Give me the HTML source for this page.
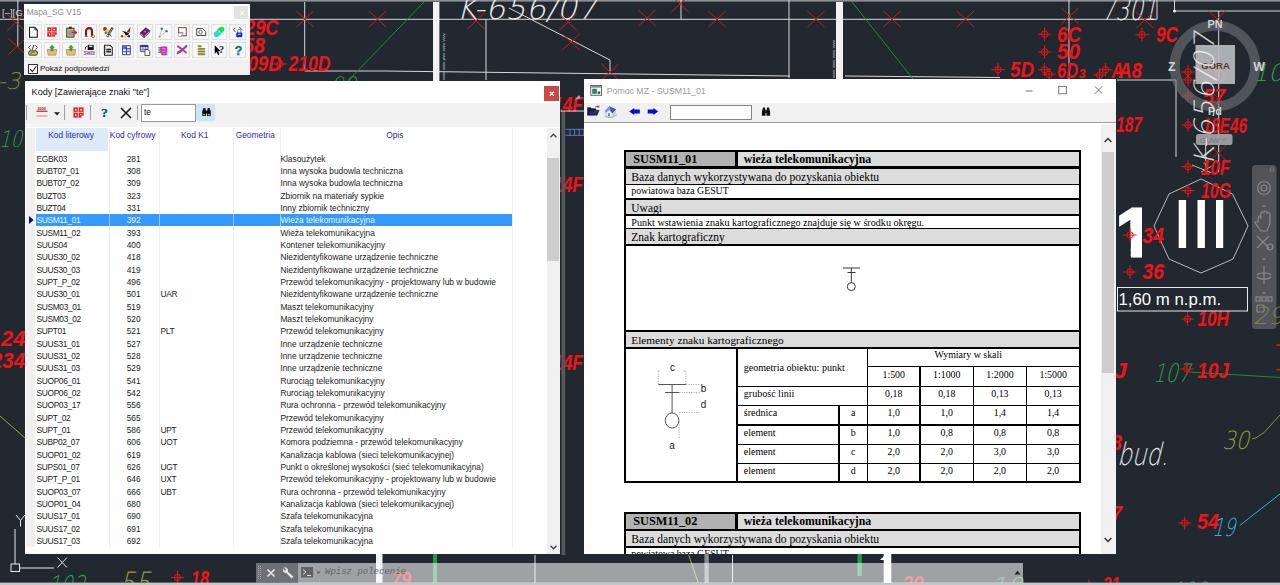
<!DOCTYPE html>
<html lang="pl"><head><meta charset="utf-8"><title>Mapa_SG V15</title>
<style>
html,body{margin:0;padding:0;}
body{width:1280px;height:585px;overflow:hidden;background:#212830;position:relative;font-family:"Liberation Sans",sans-serif;}
.abs{position:absolute;}
.win{position:absolute;background:#fff;}
.t{position:absolute;white-space:nowrap;}
.sans{font-family:"Liberation Sans",sans-serif;}
.serif{font-family:"Liberation Serif",serif;}
.mono{font-family:"Liberation Mono",monospace;}
#bg{position:absolute;left:0;top:0;}
.row{position:absolute;left:0;width:486px;height:12.33px;line-height:12.33px;font-size:8.4px;color:#1c1c1c;}
.row span{position:absolute;top:0;white-space:nowrap;}
.row .c1{left:10.9px;letter-spacing:-0.36px;}
.row .c2{left:83px;width:50px;text-align:center;}
.row .c3{left:134.8px;letter-spacing:-0.3px;}
.row .c4{left:254.7px;}
.sel{background:#3399ff;color:#fff;}
.hd{position:absolute;top:0;height:23.5px;font-size:8.4px;color:#2a2ac8;text-align:center;line-height:15px;}
.tb{position:absolute;width:14.4px;height:14.4px;background:#f7f7f7;border:0.5px solid #e0e0e0;}
.tb svg{position:absolute;left:1.3px;top:1.3px;width:12px;height:12px;}
.cell{position:absolute;background:#fff;white-space:nowrap;overflow:hidden;color:#000;}
.g{background:#dcdcdc;}
.num{text-align:center;font-size:9.9px;}
</style></head><body>
<div class="abs" style="left:1110px;top:200px;width:40px;height:62px;overflow:hidden;clip-path:polygon(0 0,32px 0,32px 60px,20.8px 60px,20.8px 38px,0 38px);"><span class="sans" style="position:absolute;left:6px;top:-1.560px;font-weight:bold;font-size:68px;line-height:68px;color:#fff;-webkit-text-stroke:3px #fff;">1</span></div><svg id="bg" width="1280" height="585" viewBox="0 0 1280 585"><rect x="0" y="0" width="1280" height="1.6" fill="#8e9194"/><g stroke="#d8d8d8" stroke-width="1" fill="none"><path d="M0 19.3H1157"/><path d="M304.7 2V71H384L790 76"/><path d="M486 19V80"/><path d="M17.800 0V47"/><path d="M681 0V19"/><path d="M789 0V78"/><path d="M845 76L1000 77.5"/><path d="M1069 0V80"/><path d="M1157 0V19.3"/><path d="M1174.5 0V11H1280"/><path d="M1117 80H1176V157"/><path d="M1218.7 11V172"/><path d="M1205.7 140V172"/><path d="M509 8L610 60V72"/><path d="M535 555V585"/><path d="M732.5 555V585"/></g><circle cx="1174.5" cy="11" r="1.5" fill="#eee"/><rect x="433" y="2" width="6.4" height="80" fill="#f2f2f2"/><rect x="836" y="2" width="7" height="78" fill="#f2f2f2"/><rect x="376" y="554" width="6.5" height="31" fill="#f2f2f2"/><rect x="883.7" y="554" width="7.6" height="31" fill="#ffffff"/><path d="M880 560L884 556V560Z" fill="#fff"/><rect x="704.5" y="554" width="4.3" height="31" fill="#8d9093"/><rect x="433" y="554" width="4" height="31" fill="#1f9d3f"/><rect x="857.5" y="554" width="4.3" height="22" fill="#1f9d3f"/><path d="M688.7 555L698.7 584" stroke="#c8c83c" stroke-width="0.8"/><text transform="translate(444.5,80) rotate(-90)" font-family="Liberation Sans, sans-serif" font-size="4" fill="#ddd">vvvv. vvvv. wvv. vvvv. vvvv.</text><text transform="translate(835,78) rotate(-90)" font-family="Liberation Sans, sans-serif" font-size="4" fill="#ddd">vvvv. vvvv. vvvv. vvvv.</text><path d="M424 2L345 84" stroke="#1e8c3c" stroke-width="1" fill="none"/><path d="M852 2L913 79" stroke="#1e8c3c" stroke-width="1" fill="none"/><path d="M1189 372L1280 377.5" stroke="#1e8c3c" stroke-width="1" fill="none"/><path d="M1252 439L1256 437.800L1264 432.600L1280 415" stroke="#8f9a2e" stroke-width="1" fill="none"/><path d="M0 416L25 438L40 452" stroke="#9aa52e" stroke-width="1" fill="none"/><path d="M1239.700 525.500L1280 494" stroke="#22b8c8" stroke-width="1" fill="none"/><text transform="translate(456,19) rotate(0) skewX(-14)" font-family="DejaVu Sans Light, DejaVu Sans, sans-serif" font-size="31" fill="#e6e6e6" fill-opacity="1" textLength="141" lengthAdjust="spacingAndGlyphs">K-656/07</text><text transform="translate(1101.5,19.5) rotate(0) skewX(-12)" font-family="DejaVu Sans Light, DejaVu Sans, sans-serif" font-size="31" fill="#e6e6e6" fill-opacity="1" textLength="55" lengthAdjust="spacingAndGlyphs">7301</text><text transform="translate(1117,465) rotate(0) skewX(-14)" font-family="DejaVu Sans Light, DejaVu Sans, sans-serif" font-size="31" fill="#e6e6e6" fill-opacity="1" textLength="51" lengthAdjust="spacingAndGlyphs">bud.</text><text x="2" y="16" font-family="Liberation Sans, sans-serif" font-size="9.5" fill="#d0d0d0">[–][G</text><text transform="translate(-2.5,89) rotate(0) skewX(-14)" font-family="DejaVu Sans Light, DejaVu Sans, sans-serif" font-size="23" fill="#909c30" fill-opacity="0.85">-3</text><text transform="translate(-1,147) rotate(0) skewX(-14)" font-family="DejaVu Sans Light, DejaVu Sans, sans-serif" font-size="23" fill="#27a048" fill-opacity="1" textLength="23" lengthAdjust="spacingAndGlyphs">10</text><text transform="translate(331,91) rotate(0) skewX(-14)" font-family="DejaVu Sans Light, DejaVu Sans, sans-serif" font-size="20" fill="#27a048" fill-opacity="1">90</text><text transform="translate(1253,80.5) rotate(0) skewX(-14)" font-family="DejaVu Sans Light, DejaVu Sans, sans-serif" font-size="24" fill="#27a048" fill-opacity="1">10</text><text transform="translate(1153,381.5) rotate(0) skewX(-14)" font-family="DejaVu Sans Light, DejaVu Sans, sans-serif" font-size="25.5" fill="#27a048" fill-opacity="1" textLength="37" lengthAdjust="spacingAndGlyphs">107</text><text transform="translate(1222,448.5) rotate(0) skewX(-14)" font-family="DejaVu Sans Light, DejaVu Sans, sans-serif" font-size="25" fill="#909c30" fill-opacity="1" textLength="27" lengthAdjust="spacingAndGlyphs">30</text><text transform="translate(1212,536) rotate(0) skewX(-14)" font-family="DejaVu Sans Light, DejaVu Sans, sans-serif" font-size="25" fill="#25bccc" fill-opacity="1" textLength="23" lengthAdjust="spacingAndGlyphs">19</text><text transform="translate(47,597) rotate(0) skewX(-14)" font-family="DejaVu Sans Light, DejaVu Sans, sans-serif" font-size="30" fill="#27a048" fill-opacity="1" textLength="37" lengthAdjust="spacingAndGlyphs">102</text><text transform="translate(119,594) rotate(0) skewX(-14)" font-family="DejaVu Sans Light, DejaVu Sans, sans-serif" font-size="31" fill="#909c30" fill-opacity="1" textLength="31" lengthAdjust="spacingAndGlyphs">55</text><text transform="translate(1171,602) rotate(0) skewX(-14)" font-family="DejaVu Sans Light, DejaVu Sans, sans-serif" font-size="28" fill="#27a048" fill-opacity="1" textLength="34" lengthAdjust="spacingAndGlyphs">106</text><text transform="translate(990,596) rotate(0) skewX(-14)" font-family="DejaVu Sans Light, DejaVu Sans, sans-serif" font-size="26" fill="#27a048" fill-opacity="1">10</text><polygon points="1201,179 1232.5,194 1248,226 1233,259 1201,273 1169,259 1154,226 1169,194" fill="none" stroke="#e0e0e0" stroke-width="0.8"/><rect x="1178.7" y="200" width="7.4" height="48" fill="#fff"/><rect x="1197.5" y="200" width="7.4" height="48" fill="#fff"/><rect x="1216" y="200" width="7.2" height="48" fill="#fff"/><path d="M1201 172L1212 166M1192 165l20 8" stroke="#e0e0e0" stroke-width="0.8"/><path d="M671.3 -4.090999999999999L688.7 12.091M671.3 12.091L688.7 -4.090999999999999" stroke="#c81c1c" stroke-width="1" fill="none"/><path d="M7.300000000000001 14.409L24.7 30.591M7.300000000000001 30.591L24.7 14.409" stroke="#c81c1c" stroke-width="1" fill="none"/><path d="M8.3 38.409L25.7 54.591M8.3 54.591L25.7 38.409" stroke="#c81c1c" stroke-width="1" fill="none"/><path d="M296.3 10.909L313.7 27.091M296.3 27.091L313.7 10.909" stroke="#c81c1c" stroke-width="1" fill="none"/><path d="M368.8 10.909L386.2 27.091M368.8 27.091L386.2 10.909" stroke="#c81c1c" stroke-width="1" fill="none"/><path d="M467.3 12.909L484.7 29.091M467.3 29.091L484.7 12.909" stroke="#c81c1c" stroke-width="1" fill="none"/><path d="M559.3 13.909L576.7 30.091M559.3 30.091L576.7 13.909" stroke="#c81c1c" stroke-width="1" fill="none"/><path d="M562.3 33.909L579.7 50.091M562.3 50.091L579.7 33.909" stroke="#c81c1c" stroke-width="1" fill="none"/><path d="M601.3 63.909L618.7 80.091M601.3 80.091L618.7 63.909" stroke="#c81c1c" stroke-width="1" fill="none"/><path d="M638.3 9.909L655.7 26.091M638.3 26.091L655.7 9.909" stroke="#c81c1c" stroke-width="1" fill="none"/><path d="M708.3 10.909L725.7 27.091M708.3 27.091L725.7 10.909" stroke="#c81c1c" stroke-width="1" fill="none"/><path d="M807.3 10.909L824.7 27.091M807.3 27.091L824.7 10.909" stroke="#c81c1c" stroke-width="1" fill="none"/><path d="M883.3 10.909L900.7 27.091M883.3 27.091L900.7 10.909" stroke="#c81c1c" stroke-width="1" fill="none"/><path d="M956.8 10.909L974.2 27.091M956.8 27.091L974.2 10.909" stroke="#c81c1c" stroke-width="1" fill="none"/><path d="M1061.3 7.909000000000001L1078.7 24.091M1061.3 24.091L1078.7 7.909000000000001" stroke="#c81c1c" stroke-width="1" fill="none"/><path d="M1136.3 11.909L1153.7 28.091M1136.3 28.091L1153.7 11.909" stroke="#c81c1c" stroke-width="1" fill="none"/><path d="M1208.3 10.909L1225.7 27.091M1208.3 27.091L1225.7 10.909" stroke="#c81c1c" stroke-width="1" fill="none"/><path d="M1209.3 89.909L1226.7 106.091M1209.3 106.091L1226.7 89.909" stroke="#c81c1c" stroke-width="1" fill="none"/><path d="M1209.3 144.909L1226.7 161.091M1209.3 161.091L1226.7 144.909" stroke="#c81c1c" stroke-width="1" fill="none"/><text x="245" y="35" font-family="Liberation Sans, sans-serif" font-size="22.5" font-weight="bold" font-style="italic" fill="#ee1418" textLength="33.5" lengthAdjust="spacingAndGlyphs">29C</text><text x="243" y="53" font-family="Liberation Sans, sans-serif" font-size="22.5" font-weight="bold" font-style="italic" fill="#ee1418" textLength="22" lengthAdjust="spacingAndGlyphs">58</text><text x="237" y="71" font-family="Liberation Sans, sans-serif" font-size="22.5" font-weight="bold" font-style="italic" fill="#ee1418" textLength="44.7" lengthAdjust="spacingAndGlyphs">209D</text><text x="288.4" y="71" font-family="Liberation Sans, sans-serif" font-size="22.5" font-weight="bold" font-style="italic" fill="#ee1418" textLength="42.2" lengthAdjust="spacingAndGlyphs">210D</text><text x="1057" y="42" font-family="Liberation Sans, sans-serif" font-size="22.5" font-weight="bold" font-style="italic" fill="#ee1418" textLength="24" lengthAdjust="spacingAndGlyphs">6C</text><text x="1057" y="59" font-family="Liberation Sans, sans-serif" font-size="22.5" font-weight="bold" font-style="italic" fill="#ee1418" textLength="23" lengthAdjust="spacingAndGlyphs">50</text><text x="1010" y="76.5" font-family="Liberation Sans, sans-serif" font-size="22.5" font-weight="bold" font-style="italic" fill="#ee1418" textLength="24" lengthAdjust="spacingAndGlyphs">5D</text><text x="1057" y="78" font-family="Liberation Sans, sans-serif" font-size="22.5" font-weight="bold" font-style="italic" fill="#ee1418" textLength="21" lengthAdjust="spacingAndGlyphs">6D</text><text x="1111.6" y="78" font-family="Liberation Sans, sans-serif" font-size="22.5" font-weight="bold" font-style="italic" fill="#ee1418" textLength="12" lengthAdjust="spacingAndGlyphs">A</text><text x="1118.5" y="78" font-family="Liberation Sans, sans-serif" font-size="22.5" font-weight="bold" font-style="italic" fill="#ee1418" textLength="23.5" lengthAdjust="spacingAndGlyphs">A8</text><text x="1156" y="42" font-family="Liberation Sans, sans-serif" font-size="22.5" font-weight="bold" font-style="italic" fill="#ee1418" textLength="22" lengthAdjust="spacingAndGlyphs">9C</text><text x="1116" y="131.6" font-family="Liberation Sans, sans-serif" font-size="22.5" font-weight="bold" font-style="italic" fill="#ee1418" textLength="26" lengthAdjust="spacingAndGlyphs">187</text><text x="1202.5" y="132.5" font-family="Liberation Sans, sans-serif" font-size="22.5" font-weight="bold" font-style="italic" fill="#ee1418" textLength="44.5" lengthAdjust="spacingAndGlyphs">18E46</text><text x="1201" y="175" font-family="Liberation Sans, sans-serif" font-size="22.5" font-weight="bold" font-style="italic" fill="#ee1418" textLength="29" lengthAdjust="spacingAndGlyphs">10F</text><text x="1201" y="198" font-family="Liberation Sans, sans-serif" font-size="22.5" font-weight="bold" font-style="italic" fill="#ee1418" textLength="30" lengthAdjust="spacingAndGlyphs">10G</text><text x="1142.5" y="242.5" font-family="Liberation Sans, sans-serif" font-size="22.5" font-weight="bold" font-style="italic" fill="#ee1418" textLength="21.5" lengthAdjust="spacingAndGlyphs">34</text><text x="1142.5" y="279" font-family="Liberation Sans, sans-serif" font-size="22.5" font-weight="bold" font-style="italic" fill="#ee1418" textLength="21.5" lengthAdjust="spacingAndGlyphs">36</text><text x="1197.5" y="326" font-family="Liberation Sans, sans-serif" font-size="22.5" font-weight="bold" font-style="italic" fill="#ee1418" textLength="31.5" lengthAdjust="spacingAndGlyphs">10H</text><text x="1197" y="377.5" font-family="Liberation Sans, sans-serif" font-size="22.5" font-weight="bold" font-style="italic" fill="#ee1418" textLength="32" lengthAdjust="spacingAndGlyphs">10J</text><text x="1086" y="377.5" font-family="Liberation Sans, sans-serif" font-size="22.5" font-weight="bold" font-style="italic" fill="#ee1418" textLength="41" lengthAdjust="spacingAndGlyphs">10J</text><text x="1197" y="529" font-family="Liberation Sans, sans-serif" font-size="22.5" font-weight="bold" font-style="italic" fill="#ee1418" textLength="22" lengthAdjust="spacingAndGlyphs">54</text><text x="1" y="345.6" font-family="Liberation Sans, sans-serif" font-size="22.5" font-weight="bold" font-style="italic" fill="#ee1418" textLength="24.5" lengthAdjust="spacingAndGlyphs">24</text><text x="-9" y="368" font-family="Liberation Sans, sans-serif" font-size="22.5" font-weight="bold" font-style="italic" fill="#ee1418" textLength="34" lengthAdjust="spacingAndGlyphs">234</text><text x="553" y="112" font-family="Liberation Sans, sans-serif" font-size="22.5" font-weight="bold" font-style="italic" fill="#ee1418" textLength="30" lengthAdjust="spacingAndGlyphs">14F</text><text x="553" y="192" font-family="Liberation Sans, sans-serif" font-size="22.5" font-weight="bold" font-style="italic" fill="#ee1418" textLength="30" lengthAdjust="spacingAndGlyphs">14F</text><text x="553" y="370" font-family="Liberation Sans, sans-serif" font-size="22.5" font-weight="bold" font-style="italic" fill="#ee1418" textLength="30" lengthAdjust="spacingAndGlyphs">14F</text><text x="191" y="585.5" font-family="Liberation Sans, sans-serif" font-size="22.5" font-weight="bold" font-style="italic" fill="#ee1418" textLength="18" lengthAdjust="spacingAndGlyphs">18</text><text x="391" y="586.5" font-family="Liberation Sans, sans-serif" font-size="22.5" font-weight="bold" font-style="italic" fill="#ee1418" textLength="20" lengthAdjust="spacingAndGlyphs">79</text><text x="902.5" y="591" font-family="Liberation Sans, sans-serif" font-size="22.5" font-weight="bold" font-style="italic" fill="#ee1418" textLength="21" lengthAdjust="spacingAndGlyphs">20</text><text x="1103" y="591.5" font-family="Liberation Sans, sans-serif" font-size="22.5" font-weight="bold" font-style="italic" fill="#ee1418" textLength="17" lengthAdjust="spacingAndGlyphs">21</text><text x="1100" y="450" font-family="Liberation Sans, sans-serif" font-size="22.5" font-weight="bold" font-style="italic" fill="#ee1418" textLength="22" lengthAdjust="spacingAndGlyphs">98</text><text x="1100" y="521" font-family="Liberation Sans, sans-serif" font-size="22.5" font-weight="bold" font-style="italic" fill="#ee1418" textLength="22" lengthAdjust="spacingAndGlyphs">37</text><text x="1203" y="84" font-family="Liberation Sans, sans-serif" font-size="22.5" font-weight="bold" font-style="italic" fill="#ee1418" textLength="22" lengthAdjust="spacingAndGlyphs">5D</text><text x="1203" y="104" font-family="Liberation Sans, sans-serif" font-size="22.5" font-weight="bold" font-style="italic" fill="#ee1418" textLength="22" lengthAdjust="spacingAndGlyphs">57</text><text x="1078.5" y="78" font-family="Liberation Sans, sans-serif" font-size="13" font-weight="bold" font-style="italic" fill="#ee1418">3</text><g stroke="#e81414" stroke-width="1" fill="none"><circle cx="1044.6" cy="34.2" r="3.224"/><path d="M1037.8999999999999 34.2H1051.3M1044.6 27.500000000000004V40.900000000000006"/></g><g stroke="#e81414" stroke-width="1" fill="none"><circle cx="1044.6" cy="52" r="3.224"/><path d="M1037.8999999999999 52H1051.3M1044.6 45.3V58.7"/></g><g stroke="#e81414" stroke-width="1" fill="none"><circle cx="998" cy="69.7" r="3.224"/><path d="M991.3 69.7H1004.7M998 63.0V76.4"/></g><g stroke="#e81414" stroke-width="1" fill="none"><circle cx="1044.6" cy="69.7" r="3.224"/><path d="M1037.8999999999999 69.7H1051.3M1044.6 63.0V76.4"/></g><g stroke="#e81414" stroke-width="1" fill="none"><circle cx="1049" cy="74.4" r="3.224"/><path d="M1042.3 74.4H1055.7M1049 67.7V81.10000000000001"/></g><g stroke="#e81414" stroke-width="1" fill="none"><circle cx="1105.6" cy="69.7" r="3.224"/><path d="M1098.8999999999999 69.7H1112.3M1105.6 63.0V76.4"/></g><g stroke="#e81414" stroke-width="1" fill="none"><circle cx="1099.7" cy="75" r="3.224"/><path d="M1093.0 75H1106.4M1099.7 68.3V81.7"/></g><g stroke="#e81414" stroke-width="1" fill="none"><circle cx="1142" cy="34.7" r="3.224"/><path d="M1135.3 34.7H1148.7M1142 28.000000000000004V41.400000000000006"/></g><g stroke="#e81414" stroke-width="1" fill="none"><circle cx="1188" cy="72" r="3.224"/><path d="M1181.3 72H1194.7M1188 65.3V78.7"/></g><g stroke="#e81414" stroke-width="1" fill="none"><circle cx="1188" cy="80" r="3.224"/><path d="M1181.3 80H1194.7M1188 73.3V86.7"/></g><g stroke="#e81414" stroke-width="1" fill="none"><circle cx="1188" cy="96" r="3.224"/><path d="M1181.3 96H1194.7M1188 89.3V102.7"/></g><g stroke="#e81414" stroke-width="1" fill="none"><circle cx="1188" cy="125" r="3.224"/><path d="M1181.3 125H1194.7M1188 118.3V131.7"/></g><g stroke="#e81414" stroke-width="1" fill="none"><circle cx="1188" cy="166.7" r="3.224"/><path d="M1181.3 166.7H1194.7M1188 160.0V173.39999999999998"/></g><g stroke="#e81414" stroke-width="1" fill="none"><circle cx="1188" cy="190.6" r="3.224"/><path d="M1181.3 190.6H1194.7M1188 183.9V197.29999999999998"/></g><g stroke="#e81414" stroke-width="1" fill="none"><circle cx="1130" cy="235" r="3.224"/><path d="M1123.3 235H1136.7M1130 228.3V241.7"/></g><g stroke="#e81414" stroke-width="1" fill="none"><circle cx="1130" cy="272" r="3.224"/><path d="M1123.3 272H1136.7M1130 265.3V278.7"/></g><g stroke="#e81414" stroke-width="1" fill="none"><circle cx="1187.5" cy="319" r="3.224"/><path d="M1180.8 319H1194.2M1187.5 312.3V325.7"/></g><g stroke="#e81414" stroke-width="1" fill="none"><circle cx="1187" cy="369" r="3.224"/><path d="M1180.3 369H1193.7M1187 362.3V375.7"/></g><g stroke="#e81414" stroke-width="1" fill="none"><circle cx="1184.7" cy="523" r="3.224"/><path d="M1178.0 523H1191.4M1184.7 516.3V529.7"/></g><g stroke="#e81414" stroke-width="1" fill="none"><circle cx="1089" cy="586" r="3.224"/><path d="M1082.3 586H1095.7M1089 579.3V592.7"/></g><g stroke="#e81414" stroke-width="1" fill="none"><circle cx="280" cy="64" r="3.224"/><path d="M273.3 64H286.7M280 57.3V70.7"/></g><g stroke="#e81414" stroke-width="1" fill="none"><circle cx="177.5" cy="577.5" r="3.1"/><path d="M171.0 577.5H184.0M177.5 571.0V584.0"/></g><path d="M1276.500 345h5M1276.500 369.700h5" stroke="#f01616" stroke-width="1.600"/><rect x="561.500" y="111" width="3.800" height="444" fill="#54575b"/><path d="M561 111H585" stroke="#d8d8d8" stroke-width="1"/><g stroke="#6a7ae0" stroke-width="0.9" fill="none"><path d="M565.500 129.300H585M565.500 135.300H585M570 129.300V135.300M574.600 129.300V135.300M579.200 129.300V135.300M583.800 129.300V135.300"/></g><path d="M575 100l4-5l1.500 3z" fill="#a0b0f0"/><rect x="1117.5" y="287.5" width="130" height="23.5" fill="#212830" stroke="#e8e8e8" stroke-width="1"/><text x="1118.5" y="304.6" font-family="Liberation Sans, sans-serif" font-size="16.800" fill="#fff">1,60 m n.p.m.</text><g stroke="#e8e8e8" stroke-width="1" fill="none"><path d="M15 529V564M19.5 568H54"/><rect x="11" y="564" width="8.5" height="7.5"/><path d="M16 515l4.5 5.5l4.5-5.5M20.5 520.5V526.5M57.5 557.5l9.5 10M67 557.5l-9.5 10"/></g><rect x="0" y="582.6" width="1280" height="2.4" fill="#c4c6c8"/></svg><svg class="abs" style="left:1160px;top:10px" width="120" height="140" viewBox="1160 10 120 140"><circle cx="1215" cy="66" r="40.3" fill="none" stroke="#6c7176" stroke-opacity="0.620" stroke-width="10"/><rect x="1195.5" y="45" width="39.5" height="39" fill="#b9bbbd" fill-opacity="0.92"/><g font-family="Liberation Sans, sans-serif" font-weight="bold" fill="#d2d4d6" text-anchor="middle"><text x="1215" y="27.500" font-size="10.800">PN</text><text x="1171.700" y="71" font-size="12.300">Z</text><text x="1259" y="71" font-size="12.300">W</text><text x="1215" y="115" font-size="10.800">Pd</text></g><text x="1215.5" y="68.5" text-anchor="middle" font-family="Liberation Sans, sans-serif" font-weight="bold" font-size="9.5" fill="#5a3338">GÓRA</text><rect x="1196" y="134" width="36.5" height="11" rx="2.5" fill="#a2a5a8" fill-opacity="0.92"/><text x="1200" y="143" font-family="Liberation Sans, sans-serif" font-size="8" fill="#73777b">GUW</text><path d="M1220.500 138.500h6l-3 3z" fill="#8a8d90"/></svg><svg class="abs" style="left:1180px;top:20px" width="50" height="160" viewBox="1180 20 50 160"><text transform="translate(1213.5,166) rotate(-90) skewX(-14)" font-family="DejaVu Sans Light, DejaVu Sans, sans-serif" font-size="28" fill="#f0f0f0" fill-opacity="0.88" textLength="134" lengthAdjust="spacingAndGlyphs">K-656/07</text></svg><svg class="abs" style="left:1250px;top:163px" width="30" height="170" viewBox="1250 163 30 170"><rect x="1252" y="165" width="24.5" height="164" rx="3.5" fill="#55595e" fill-opacity="0.93"/><g stroke="#85898d" stroke-width="1.2" fill="none"><circle cx="1264" cy="188" r="6.5"/><circle cx="1264" cy="188" r="3"/><path d="M1262 206h4M1258 222c0-7 3-8 3-3v-6c2-3 3 0 3 0v-1c2-2 3 0 3 1c2-1 3 0 3 2v7c0 5-3 6-3 9h-6c-2-3-5-6-6-9z"/><path d="M1257 236l12 12M1269 236l-12 12"/><circle cx="1270" cy="247" r="2.8"/><path d="M1262 259h4"/><path d="M1264 266v18M1257 275c3-3 11-3 14 0M1257 277c3 3 11 3 14 0"/><path d="M1262 293h4"/><rect x="1256" y="297" width="4" height="4"/><rect x="1262" y="297" width="4" height="4"/><rect x="1268" y="297" width="4" height="4"/><rect x="1257" y="305" width="7" height="7" rx="1"/></g><circle cx="1272" cy="169.5" r="1.8" fill="none" stroke="#85898d" stroke-width="0.8"/></svg><svg class="abs" style="left:1250px;top:300px" width="30" height="30" viewBox="1250 300 30 30"><text transform="translate(1253,324) rotate(0) skewX(-14)" font-family="DejaVu Sans Light, DejaVu Sans, sans-serif" font-size="24" fill="#909c30" fill-opacity="0.75">29</text></svg><div class="win" style="left:24px;top:4px;width:225.5px;height:70.5px;"><div class="abs" style="left:0;top:16px;width:225.500px;height:40px;background:#f6f6f6;"></div><div class="abs" style="left:0;top:56px;width:225.500px;height:14.500px;background:#f0f0f0;"></div><div class="t sans" style="left:2.7px;top:3.2px;font-size:8.3px;color:#8c8c8c;line-height:11px;">Mapa_SG V15</div><div class="abs" style="left:210px;top:1.5px;width:14.300px;height:13.300px;background:#e2e2e2;"></div><svg class="abs" style="left:214.5px;top:5.5px" width="6" height="6" viewBox="0 0 6 6"><path d="M0.8 0.8L5.2 5.2M5.2 0.8L0.8 5.2" stroke="#f6f6f6" stroke-width="1.1"/></svg><div class="tb" style="left:1.15px;top:19.7px;"><svg viewBox="0 0 14 14"><path d="M3 1.5h6l3 3v8.5H3z" fill="#fff" stroke="#111" stroke-width="1.2"/><path d="M9 1.5v3h3" fill="none" stroke="#111" stroke-width="0.8"/></svg></div><div class="tb" style="left:19.72px;top:19.7px;"><svg viewBox="0 0 14 14"><rect x="1.500" y="1.500" width="11" height="11" fill="#e02428"/><path d="M1.500 6.800h11M6.800 1.500v11" stroke="#fbe4e4" stroke-width="0.800"/><rect x="3.300" y="3.300" width="1.600" height="1.600" fill="#fbdcdc"/><rect x="8.700" y="3.300" width="2" height="1.600" fill="#fbdcdc"/><rect x="3.300" y="8.900" width="1.600" height="1.800" fill="#fbdcdc"/><rect x="8.700" y="8.700" width="1.300" height="1.300" fill="#fbdcdc"/><rect x="10.300" y="10.300" width="3" height="3" fill="#e4e4e4"/></svg></div><div class="tb" style="left:38.29px;top:19.7px;"><svg viewBox="0 0 14 14"><rect x="2" y="2.5" width="8.5" height="10.5" fill="#d8c040" stroke="#222" stroke-width="1"/><rect x="4.5" y="0.8" width="3.5" height="2.5" fill="#333"/><rect x="4" y="5" width="5" height="6" fill="#8a8ae8"/><path d="M8 7.5h5M11 5.5l2.5 2l-2.5 2" stroke="#e02020" stroke-width="1.5" fill="none"/></svg></div><div class="tb" style="left:56.86px;top:19.7px;"><svg viewBox="0 0 14 14"><path d="M3.5 11.5V6a3.5 3.5 0 0 1 7 0v5.5" fill="none" stroke="#8a1010" stroke-width="2.4"/><path d="M2 12h3.5M9 12h3" stroke="#b02020" stroke-width="1.2"/><circle cx="12" cy="12" r="1.5" fill="#fff" stroke="#776a10" stroke-width="1"/></svg></div><div class="tb" style="left:75.43px;top:19.7px;"><svg viewBox="0 0 14 14"><circle cx="3.5" cy="3.5" r="2.3" fill="#d01818"/><circle cx="6" cy="6" r="2.2" fill="#e8d820"/><circle cx="4.5" cy="8" r="1.6" fill="#30a030"/><path d="M12.5 2L7 10.5" stroke="#333" stroke-width="2.6"/><path d="M12 2.8L7.6 9.6" stroke="#b8a860" stroke-width="1"/><path d="M4.5 11l2.5 2l2-3.5l2 3" stroke="#2848b8" stroke-width="1" fill="none"/></svg></div><div class="tb" style="left:94.00px;top:19.7px;"><svg viewBox="0 0 14 14"><path d="M12.5 1L8 6.5l3 1.8z" fill="#a01818"/><path d="M2 5.5c3 1 6 1 9 3.5l-4 2.5c-1-3-3-4.5-5-6z" fill="#111"/><circle cx="2.5" cy="12" r="1.5" fill="#e02020"/><circle cx="6.2" cy="12.3" r="1.5" fill="#e8d820"/><circle cx="10.2" cy="12" r="1.5" fill="#1818d8"/></svg></div><div class="tb" style="left:112.57px;top:19.7px;"><svg viewBox="0 0 14 14"><path d="M1.5 8L8 2l4.5 3.5L6 12z" fill="#7a1a78" stroke="#3a0a3a" stroke-width="0.8"/><path d="M1.5 8v2L6 13.5V12zM6 12l6.5-6.5v2L6 13.5z" fill="#e8e0e8" stroke="#3a0a3a" stroke-width="0.7"/><circle cx="7" cy="6.5" r="1.1" fill="#f07070"/></svg></div><div class="tb" style="left:131.14px;top:19.7px;"><svg viewBox="0 0 14 14"><path d="M3 12.5L5.5 3.5M3 12.5L11 6" stroke="#888" stroke-width="0.8" stroke-dasharray="1.5 1"/><circle cx="5.5" cy="3.2" r="1.4" fill="#1a8a80"/><circle cx="11" cy="6" r="1.4" fill="#1a8a80"/><circle cx="3" cy="12.5" r="1.1" fill="#a0a040"/></svg></div><div class="tb" style="left:149.71px;top:19.7px;"><svg viewBox="0 0 14 14"><rect x="3" y="2" width="9" height="9.5" fill="#fff" stroke="#8a3030" stroke-width="1.1"/><path d="M3.5 7.5h4.5v4" stroke="#777" stroke-width="1" fill="none"/><rect x="2.5" y="8.5" width="3.5" height="3.5" fill="#fff" stroke="#aaa" stroke-width="0.6"/></svg></div><div class="tb" style="left:168.28px;top:19.7px;"><svg viewBox="0 0 14 14"><path d="M2 3h7l3.5 3.5V11H2z" fill="#fff" stroke="#333" stroke-width="1.1"/><circle cx="6.5" cy="7" r="2" fill="none" stroke="#555" stroke-width="1.1"/></svg></div><div class="tb" style="left:186.85px;top:19.7px;"><svg viewBox="0 0 14 14"><ellipse cx="9" cy="4.8" rx="4.6" ry="3.4" transform="rotate(-35 9 4.8)" fill="#20e038"/><ellipse cx="5.2" cy="9" rx="4.6" ry="3.4" transform="rotate(-35 5.2 9)" fill="#20dce0"/><path d="M6.5 5.5l2 2" stroke="#e8fff0" stroke-width="1.2"/></svg></div><div class="tb" style="left:205.42px;top:19.7px;"><svg viewBox="0 0 14 14"><path d="M4 2L1.8 4.5L4 7M8.5 1.5l3.5 3" stroke="#333" stroke-width="1" fill="none"/><path d="M6.5 8V6a2 2 0 0 1 4 0v2" fill="none" stroke="#777" stroke-width="1.1"/><rect x="5" y="7.5" width="7" height="5.5" rx="1" fill="#1828c8"/><rect x="7" y="9" width="3" height="1.5" fill="#a8b0f8"/></svg></div><div class="tb" style="left:1.15px;top:38.1px;"><svg viewBox="0 0 14 14"><path d="M4.5 1.5L2 4l2.5 2.5M9.5 1.5L12 4L9.5 6.5M8 1L6 7" stroke="#222" stroke-width="1" fill="none"/><rect x="2" y="8" width="10" height="5" rx="1.5" fill="#c8d040" stroke="#222" stroke-width="1"/><path d="M4 11.5c1-2 3-2 5-2" stroke="#333" stroke-width="0.9" fill="none"/></svg></div><div class="tb" style="left:19.72px;top:38.1px;"><svg viewBox="0 0 14 14"><path d="M1.5 6.5h11l-1 6.5h-9z" fill="#e6bc80" stroke="#a87838" stroke-width="0.700"/><path d="M7 1.200l2.600 3H8.300v3.600H5.700V4.200H4.400z" fill="#2fb52f" stroke="#187018" stroke-width="0.500"/></svg></div><div class="tb" style="left:38.29px;top:38.1px;"><svg viewBox="0 0 14 14"><path d="M1.5 6.5h11l-1 6.5h-9z" fill="#e6bc80" stroke="#a87838" stroke-width="0.700"/><path d="M7 1.200l2.600 3H8.300v3.600H5.700V4.200H4.400z" fill="#2fb52f" stroke="#187018" stroke-width="0.500"/></svg></div><div class="tb" style="left:56.86px;top:38.1px;"><svg viewBox="0 0 14 14"><rect x="5.5" y="1" width="7" height="6" fill="#111"/><rect x="7" y="1.800" width="4" height="1.8" fill="#ddd"/><path d="M2.5 6.5c0-3 1-3.500 2.500-3.500" stroke="#222" stroke-width="1.1" fill="none"/><text x="1" y="13" font-family="Liberation Sans, sans-serif" font-size="5.200" font-weight="bold" fill="#8040a0">SWDE</text></svg></div><div class="tb" style="left:75.43px;top:38.1px;"><svg viewBox="0 0 14 14"><path d="M3 1.5h6.500l2.500 2.500V13H3z" fill="#f4f4f4" stroke="#222" stroke-width="1.2"/><path d="M2 3.500h2M2 6h2M2 8.500h2M2 11h2" stroke="#222" stroke-width="0.9"/><rect x="5" y="5.500" width="5.500" height="4.500" fill="#222"/><path d="M5 7.700h5.500" stroke="#eee" stroke-width="0.8"/></svg></div><div class="tb" style="left:94.00px;top:38.1px;"><svg viewBox="0 0 14 14"><rect x="3" y="2" width="9" height="10.500" fill="#fff" stroke="#3038a8" stroke-width="1.1"/><path d="M7.500 2v10.500M3 5.500h9M3 9h9" stroke="#3038a8" stroke-width="1.200"/><rect x="3.500" y="2.500" width="3.500" height="2.500" fill="#5868e0"/><rect x="8" y="6" width="3.500" height="2.500" fill="#a8b0f0"/></svg></div><div class="tb" style="left:112.57px;top:38.1px;"><svg viewBox="0 0 14 14"><rect x="1.500" y="1.500" width="9" height="7" fill="#fff" stroke="#2830a0" stroke-width="1"/><rect x="1.500" y="1.500" width="9" height="2.200" fill="#2830a0"/><path d="M4.500 3.700v4.800M7.500 3.700v4.800M1.500 6h9" stroke="#2830a0" stroke-width="0.700"/><path d="M7 6.500h3.500l2 2V13.500H7z" fill="#fff" stroke="#222" stroke-width="0.9"/></svg></div><div class="tb" style="left:131.14px;top:38.1px;"><svg viewBox="0 0 14 14"><rect x="4" y="3" width="8" height="8.500" rx="1.500" fill="#d028c0"/><path d="M1.500 4.500h3M1.500 7h3M1.500 9.500h3M5 12.500h7" stroke="#222" stroke-width="1"/><path d="M6 5.500h4M6 8.500h4" stroke="#f8a0f0" stroke-width="1"/></svg></div><div class="tb" style="left:149.71px;top:38.1px;"><svg viewBox="0 0 14 14"><path d="M1 11.500C5 10 9 5 13 2.500" stroke="#d028a0" stroke-width="2" fill="none"/><path d="M1 9.500C5 9 9 4 13 1.500" stroke="#207860" stroke-width="1.200" fill="none"/><path d="M1.500 2.500C5 4 9 8 12.500 10.500" stroke="#d028a0" stroke-width="2" fill="none"/></svg></div><div class="tb" style="left:168.28px;top:38.1px;"><svg viewBox="0 0 14 14"><rect x="3" y="1.500" width="5" height="2.200" rx="1" fill="#8a8a30"/><rect x="3" y="4.600" width="9" height="2.200" rx="1" fill="#8a8a30"/><rect x="3" y="7.700" width="9" height="2.200" rx="1" fill="#8a8a30"/><rect x="3" y="10.800" width="9" height="2.200" rx="1" fill="#8a8a30"/></svg></div><div class="tb" style="left:186.85px;top:38.1px;"><svg viewBox="0 0 14 14"><path d="M2 1.500v10l2.300-2.300l1.700 3.800l1.600-.8l-1.700-3.600h3.100z" fill="#000"/><text x="6.800" y="10" font-family="Liberation Serif, serif" font-size="12.500" font-weight="bold" fill="#15155e">?</text></svg></div><div class="tb" style="left:205.42px;top:38.1px;"><svg viewBox="0 0 14 14"><text x="2.800" y="12.500" font-family="Liberation Sans, sans-serif" font-size="15" font-weight="bold" fill="#0f7c8c" stroke="#0a5560" stroke-width="0.300">?</text></svg></div><div class="abs" style="left:4px;top:60px;width:8.4px;height:8.4px;border:0.9px solid #333;background:#fff;"></div><svg class="abs" style="left:5px;top:61px" width="9" height="9" viewBox="0 0 9 9"><path d="M1.2 4.2L3.400 6.700L7.300 1.300" stroke="#222" stroke-width="1.100" fill="none"/></svg><div class="t sans" style="left:16px;top:58.6px;font-size:8.05px;line-height:11px;color:#111;">Pokaż podpowiedzi</div></div><div class="win" style="left:24.700px;top:80.700px;width:535.500px;height:473px;"><div class="t sans" style="left:6.900px;top:5.400px;font-size:9.100px;line-height:12px;color:#111;">Kody [Zawierające znaki "te"]</div><div class="abs" style="left:519.800px;top:5.600px;width:14.500px;height:14.600px;background:#c84848;"></div><svg class="abs" style="left:524.500px;top:10.300px" width="5.500" height="5.500" viewBox="0 0 6 6"><path d="M0.800 0.800L5.200 5.200M5.200 0.800L0.800 5.200" stroke="#fff" stroke-width="1.300"/></svg><div class="abs" style="left:0;top:22.300px;width:535.500px;height:20.200px;background:#f1f1f1;"></div><div class="abs" style="left:0;top:42.500px;width:535.500px;height:3.500px;background:#f4f4f4;"></div><div class="abs" style="left:1.3px;top:24.500px;width:0.800px;height:15px;background:#a0a0a0;"></div><div class="abs" style="left:39.6px;top:24.500px;width:0.800px;height:15px;background:#a0a0a0;"></div><div class="abs" style="left:65.6px;top:24.500px;width:0.800px;height:15px;background:#a0a0a0;"></div><div class="abs" style="left:112.1px;top:24.500px;width:0.800px;height:15px;background:#a0a0a0;"></div><svg class="abs" style="left:11px;top:25px" width="13" height="13" viewBox="0 0 13 13"><path d="M0.500 5.200H11.500" stroke="#b82424" stroke-width="1.200"/><path d="M0.500 10H11.500" stroke="#e86060" stroke-width="0.800"/><text x="1.500" y="4.300" font-family="Liberation Sans, sans-serif" font-size="3.800" font-weight="bold" fill="#a02020">2000</text></svg><svg class="abs" style="left:29.300px;top:31px" width="6" height="4" viewBox="0 0 6 4"><path d="M0 0.300h6L3 3.600z" fill="#222"/></svg><svg class="abs" style="left:47.500px;top:25.500px" width="13" height="13" viewBox="0 0 14 14"><rect x="1.500" y="1.500" width="11" height="11" fill="#e02428"/><path d="M1.500 6.800h11M6.800 1.500v11" stroke="#fbe4e4" stroke-width="0.800"/><rect x="3.300" y="3.300" width="1.600" height="1.600" fill="#fbdcdc"/><rect x="8.700" y="3.300" width="2" height="1.600" fill="#fbdcdc"/><rect x="3.300" y="8.900" width="1.600" height="1.800" fill="#fbdcdc"/><rect x="8.700" y="8.700" width="1.300" height="1.300" fill="#fbdcdc"/><rect x="10.300" y="10.300" width="3" height="3" fill="#f4f4f4"/></svg><div class="t serif" style="left:76.200px;top:24.300px;font-size:13.500px;font-weight:bold;color:#0c7686;line-height:15px;text-shadow:0.4px 0.4px 0 #123;">?</div><svg class="abs" style="left:95px;top:26px" width="12" height="12" viewBox="0 0 12 12"><path d="M1 1L11 11M11 1L1 11" stroke="#111" stroke-width="1.500"/></svg><div class="abs" style="left:116.600px;top:23.800px;width:53px;height:15.200px;background:#fff;border:0.700px solid #9a9a9a;"></div><div class="t sans" style="left:119.300px;top:25.500px;font-size:8.400px;line-height:12px;color:#111;">te</div><div class="abs" style="left:171.300px;top:23.300px;width:19.500px;height:16.700px;background:#cce4f7;"></div><svg class="abs" style="left:176px;top:26.500px" width="11" height="10" viewBox="0 0 11 10"><path d="M1.200 9V4.500L2.500 1h1.800l.7 3.500V9zM6 9V4.500L6.700 1h1.800l1.300 3.500V9z" fill="#111"/><rect x="4.500" y="3.500" width="2" height="3" fill="#111"/><rect x="1.800" y="7" width="2.400" height="1.200" fill="#c8b040"/><rect x="6.800" y="7" width="2.400" height="1.200" fill="#c8b040"/></svg><div class="abs" style="left:1px;top:47.0px;width:534px;height:426px;background:#fff;overflow:hidden;"><div class="abs" style="left:0;top:0;width:9.800px;height:418.9px;background:#f0f0f0;"></div><div class="hd sans" style="left:10.3px;width:72.5px;background:#ddebf9;"><span style="position:relative;left:-1.2px">Kod literowy</span></div><div class="hd sans" style="left:83.3px;width:49.7px;background:#fff;"><span style="position:relative;left:-1.2px">Kod cyfrowy</span></div><div class="hd sans" style="left:133.5px;width:73.5px;background:#fff;"><span style="position:relative;left:-1.2px">Kod K1</span></div><div class="hd sans" style="left:207.5px;width:46.5px;background:#fff;"><span style="position:relative;left:-1.2px">Geometria</span></div><div class="hd sans" style="left:254.5px;width:231.5px;background:#fff;"><span style="position:relative;left:-1.2px">Opis</span></div><div class="abs" style="left:83px;top:0;width:0.800px;height:418.9px;background:#eeeeee;"></div><div class="abs" style="left:133.2px;top:0;width:0.800px;height:418.9px;background:#eeeeee;"></div><div class="abs" style="left:207.2px;top:0;width:0.800px;height:418.9px;background:#eeeeee;"></div><div class="abs" style="left:254.2px;top:0;width:0.800px;height:418.9px;background:#eeeeee;"></div><div class="abs" style="left:486px;top:0;width:0.800px;height:418.9px;background:#eeeeee;"></div><div class="row sans" style="top:24.83px;"><span class="c1">EGBK03</span><span class="c2">281</span><span class="c3"></span><span class="c4">Klasoużytek</span></div><div class="row sans" style="top:37.17px;"><span class="c1">BUBT07_01</span><span class="c2">308</span><span class="c3"></span><span class="c4">Inna wysoka budowla techniczna</span></div><div class="row sans" style="top:49.51px;"><span class="c1">BUBT07_02</span><span class="c2">309</span><span class="c3"></span><span class="c4">Inna wysoka budowla techniczna</span></div><div class="row sans" style="top:61.85px;"><span class="c1">BUZT03</span><span class="c2">323</span><span class="c3"></span><span class="c4">Zbiornik na materiały sypkie</span></div><div class="row sans" style="top:74.19px;"><span class="c1">BUZT04</span><span class="c2">331</span><span class="c3"></span><span class="c4">Inny zbiornik techniczny</span></div><div class="abs sel" style="left:10.300px;top:85.98px;width:475.700px;height:12.04px;"></div><div class="abs" style="left:83px;top:85.98px;width:0.800px;height:12.04px;background:#9ccbfb;"></div><div class="abs" style="left:133.2px;top:85.98px;width:0.800px;height:12.04px;background:#9ccbfb;"></div><div class="abs" style="left:207.2px;top:85.98px;width:0.800px;height:12.04px;background:#9ccbfb;"></div><div class="abs" style="left:254.2px;top:85.98px;width:0.800px;height:12.04px;background:#9ccbfb;"></div><svg class="abs" style="left:3.300px;top:88.73px" width="5" height="8" viewBox="0 0 5 8"><path d="M0 0L4.600 4L0 8z" fill="#0a0aa0"/></svg><div class="row sans" style="top:86.53px;"><span class="c1" style="color:#eaf4ff">SUSM11_01</span><span class="c2" style="color:#eaf4ff">392</span><span class="c3" style="color:#eaf4ff"></span><span class="c4" style="color:#eaf4ff">Wieża telekomunikacyjna</span></div><div class="row sans" style="top:98.87px;"><span class="c1">SUSM11_02</span><span class="c2">393</span><span class="c3"></span><span class="c4">Wieża telekomunikacyjna</span></div><div class="row sans" style="top:111.21px;"><span class="c1">SUUS04</span><span class="c2">400</span><span class="c3"></span><span class="c4">Kontener telekomunikacyjny</span></div><div class="row sans" style="top:123.55px;"><span class="c1">SUUS30_02</span><span class="c2">418</span><span class="c3"></span><span class="c4">Niezidentyfikowane urządzenie techniczne</span></div><div class="row sans" style="top:135.89px;"><span class="c1">SUUS30_03</span><span class="c2">419</span><span class="c3"></span><span class="c4">Niezidentyfikowane urządzenie techniczne</span></div><div class="row sans" style="top:148.23px;"><span class="c1">SUPT_P_02</span><span class="c2">496</span><span class="c3"></span><span class="c4">Przewód telekomunikacyjny - projektowany lub w budowie</span></div><div class="row sans" style="top:160.57px;"><span class="c1">SUUS30_01</span><span class="c2">501</span><span class="c3">UAR</span><span class="c4">Niezidentyfikowane urządzenie techniczne</span></div><div class="row sans" style="top:172.91px;"><span class="c1">SUSM03_01</span><span class="c2">519</span><span class="c3"></span><span class="c4">Maszt telekomunikacyjny</span></div><div class="row sans" style="top:185.25px;"><span class="c1">SUSM03_02</span><span class="c2">520</span><span class="c3"></span><span class="c4">Maszt telekomunikacyjny</span></div><div class="row sans" style="top:197.59px;"><span class="c1">SUPT01</span><span class="c2">521</span><span class="c3">PLT</span><span class="c4">Przewód telekomunikacyjny</span></div><div class="row sans" style="top:209.93px;"><span class="c1">SUUS31_01</span><span class="c2">527</span><span class="c3"></span><span class="c4">Inne urządzenie techniczne</span></div><div class="row sans" style="top:222.27px;"><span class="c1">SUUS31_02</span><span class="c2">528</span><span class="c3"></span><span class="c4">Inne urządzenie techniczne</span></div><div class="row sans" style="top:234.61px;"><span class="c1">SUUS31_03</span><span class="c2">529</span><span class="c3"></span><span class="c4">Inne urządzenie techniczne</span></div><div class="row sans" style="top:246.95px;"><span class="c1">SUOP06_01</span><span class="c2">541</span><span class="c3"></span><span class="c4">Rurociąg telekomunikacyjny</span></div><div class="row sans" style="top:259.29px;"><span class="c1">SUOP06_02</span><span class="c2">542</span><span class="c3"></span><span class="c4">Rurociąg telekomunikacyjny</span></div><div class="row sans" style="top:271.63px;"><span class="c1">SUOP03_17</span><span class="c2">556</span><span class="c3"></span><span class="c4">Rura ochronna - przewód telekomunikacyjny</span></div><div class="row sans" style="top:283.97px;"><span class="c1">SUPT_02</span><span class="c2">565</span><span class="c3"></span><span class="c4">Przewód telekomunikacyjny</span></div><div class="row sans" style="top:296.31px;"><span class="c1">SUPT_01</span><span class="c2">586</span><span class="c3">UPT</span><span class="c4">Przewód telekomunikacyjny</span></div><div class="row sans" style="top:308.65px;"><span class="c1">SUBP02_07</span><span class="c2">606</span><span class="c3">UOT</span><span class="c4">Komora podziemna - przewód telekomunikacyjny</span></div><div class="row sans" style="top:320.99px;"><span class="c1">SUOP01_02</span><span class="c2">619</span><span class="c3"></span><span class="c4">Kanalizacja kablowa (sieci telekomunikacyjnej)</span></div><div class="row sans" style="top:333.33px;"><span class="c1">SUPS01_07</span><span class="c2">626</span><span class="c3">UGT</span><span class="c4">Punkt o określonej wysokości (sieć telekomunikacyjna)</span></div><div class="row sans" style="top:345.67px;"><span class="c1">SUPT_P_01</span><span class="c2">646</span><span class="c3">UXT</span><span class="c4">Przewód telekomunikacyjny - projektowany lub w budowie</span></div><div class="row sans" style="top:358.01px;"><span class="c1">SUOP03_07</span><span class="c2">666</span><span class="c3">UBT</span><span class="c4">Rura ochronna - przewód telekomunikacyjny</span></div><div class="row sans" style="top:370.35px;"><span class="c1">SUOP01_04</span><span class="c2">680</span><span class="c3"></span><span class="c4">Kanalizacja kablowa (sieci telekomunikacyjnej)</span></div><div class="row sans" style="top:382.69px;"><span class="c1">SUUS17_01</span><span class="c2">690</span><span class="c3"></span><span class="c4">Szafa telekomunikacyjna</span></div><div class="row sans" style="top:395.03px;"><span class="c1">SUUS17_02</span><span class="c2">691</span><span class="c3"></span><span class="c4">Szafa telekomunikacyjna</span></div><div class="row sans" style="top:407.37px;"><span class="c1">SUUS17_03</span><span class="c2">692</span><span class="c3"></span><span class="c4">Szafa telekomunikacyjna</span></div><div class="abs" style="left:521.300px;top:0;width:12.700px;height:426px;background:#f0f0f0;"></div><div class="abs" style="left:521.800px;top:30.500px;width:11.200px;height:102.500px;background:#cdcdcd;"></div><svg class="abs" style="left:524px;top:5.500px" width="7" height="5" viewBox="0 0 7 5"><path d="M0.500 4.200L3.500 1.200L6.500 4.200" stroke="#444" stroke-width="1.300" fill="none"/></svg><svg class="abs" style="left:524px;top:417.500px" width="7" height="5" viewBox="0 0 7 5"><path d="M0.500 0.800L3.500 3.800L6.500 0.800" stroke="#444" stroke-width="1.300" fill="none"/></svg></div></div><div class="win" style="left:584.2px;top:79.3px;width:531.400px;height:474.500px;overflow:hidden;"><svg class="abs" style="left:5.800px;top:5.700px" width="12.200" height="10.800" viewBox="0 0 11.500 10.500"><rect x="0.500" y="0.500" width="10.500" height="9.500" fill="#fff" stroke="#6a6a6a" stroke-width="1"/><rect x="1" y="1" width="9.500" height="1.600" fill="#888"/><rect x="2" y="3.600" width="4.500" height="5" fill="#1f8a6a"/><rect x="7.300" y="6.300" width="2.400" height="2.300" fill="#444"/></svg><div class="t sans" style="left:22.500px;top:6.200px;font-size:8.750px;line-height:12px;color:#9a9a9a;">Pomoc MZ - SUSM11_01</div><svg class="abs" style="left:438px;top:2px" width="90" height="18" viewBox="0 0 90 18"><path d="M3.500 10H10.500" stroke="#555" stroke-width="0.800"/><rect x="36.800" y="5.300" width="7.500" height="7.500" fill="none" stroke="#555" stroke-width="0.800"/><path d="M72.800 5.300L80.300 12.800M80.300 5.300L72.800 12.800" stroke="#555" stroke-width="0.800"/></svg><div class="abs" style="left:0;top:23.500px;width:531.400px;height:19.300px;background:#f0f0f0;"></div><div class="abs" style="left:0;top:42.700px;width:531.400px;height:1.200px;background:#a0a0a0;"></div><svg class="abs" style="left:2.600px;top:25.800px" width="12.800" height="11.500" viewBox="0 0 14 13"><path d="M0.500 11.500V3h3.500l1 1.200h4.500V6" fill="#18184a" stroke="#111" stroke-width="0.700"/><path d="M0.500 11.500L3 6h10.500L11 11.500z" fill="#2a2a7a" stroke="#111" stroke-width="0.700"/><path d="M9 2.500c1.500-1.500 3-1.500 4 0M13 2.500l.3-1.800M13 2.500l-1.800-.2" stroke="#222" stroke-width="0.800" fill="none"/></svg><svg class="abs" style="left:20.300px;top:25.300px" width="13" height="13" viewBox="0 0 13 13"><path d="M1 6L5.500 1.200L12.300 4.500L8.300 8.800z" fill="#3558c8"/><path d="M1 6L5.500 1.200L6.800 5.500L2.300 10z" fill="#7c98e4"/><path d="M2 7.500L5.500 5L8.300 8.500V12.300L2 10.800z" fill="#f2f4f8" stroke="#9aa8c8" stroke-width="0.500"/><path d="M8.300 8.500L12 5V9.200L8.300 12.300z" fill="#c9d2e6"/><rect x="4" y="8.300" width="1.800" height="2.800" fill="#5d78b8"/><path d="M0.500 11.300L7 13L12.800 9.800" stroke="#7fb37f" stroke-width="0.800" fill="none"/></svg><svg class="abs" style="left:45px;top:27.800px" width="30" height="9" viewBox="0 0 30 9"><path d="M0.300 4.500L5.200 0.900V2.400H10.800V6.600H5.200V8.100z" fill="#0a0acc"/><path d="M29.200 4.500L24.300 0.900V2.400H18.700V6.600H24.300V8.100z" fill="#0a0acc"/></svg><div class="abs" style="left:86.300px;top:25.800px;width:80px;height:13.300px;background:#fff;border:0.700px solid #858585;"></div><svg class="abs" style="left:176.600px;top:27.600px" width="10" height="9.200" viewBox="0 0 11 10"><path d="M1 9.500V4.500L2.300 0.500h2l.7 3.500V9.500zM6 9.500V4L6.700 0.500h2l1.300 4V9.500z" fill="#111"/><rect x="4.500" y="3.500" width="2" height="3" fill="#111"/></svg><div class="abs" style="left:517px;top:44.300px;width:14.400px;height:431px;background:#f0f0f0;"></div><div class="abs" style="left:518.300px;top:72.300px;width:11.700px;height:221.500px;background:#cdcdcd;"></div><svg class="abs" style="left:520.300px;top:57.500px" width="8" height="6" viewBox="0 0 8 6"><path d="M0.600 5L4 1.500L7.400 5" stroke="#333" stroke-width="1.500" fill="none"/></svg><svg class="abs" style="left:520.300px;top:457.500px" width="8" height="6" viewBox="0 0 8 6"><path d="M0.600 1L4 4.500L7.400 1" stroke="#333" stroke-width="1.500" fill="none"/></svg><div class="abs" style="left:40.30px;top:70.70px;width:456.80px;height:333.00px;background:#000;"></div><div class="cell serif " style="left:42.20px;top:72.70px;width:109.10px;height:14.40px;line-height:14.40px;font-size:12.3px;padding-left:6.8px;width:102.30px;background:#b2b2b2;"><b>SUSM11_01</b></div><div class="cell serif g" style="left:153.80px;top:72.70px;width:341.30px;height:14.40px;line-height:14.40px;font-size:11.8px;padding-left:5.8px;width:335.50px;"><b>wieża telekomunikacyjna</b></div><div class="cell serif g" style="left:42.20px;top:89.40px;width:452.90px;height:15.30px;line-height:17.30px;font-size:11.58px;padding-left:4.9px;width:448.00px;">Baza danych wykorzystywana do pozyskania obiektu</div><div class="cell serif " style="left:42.20px;top:106.10px;width:452.90px;height:12.40px;line-height:12.40px;font-size:9.8px;padding-left:4.9px;width:448.00px;">powiatowa baza GESUT</div><div class="cell serif g" style="left:42.20px;top:120.30px;width:452.90px;height:14.40px;line-height:16.40px;font-size:11.5px;padding-left:4.9px;width:448.00px;">Uwagi</div><div class="cell serif " style="left:42.20px;top:136.30px;width:452.90px;height:12.00px;line-height:13.60px;font-size:10.12px;padding-left:4.9px;width:448.00px;">Punkt wstawienia znaku kartograficznego znajduje się w środku okręgu.</div><div class="cell serif g" style="left:42.20px;top:150.00px;width:452.90px;height:14.70px;line-height:16.30px;font-size:11.5px;padding-left:4.9px;width:448.00px;">Znak kartograficzny</div><div class="cell serif " style="left:42.20px;top:166.30px;width:452.90px;height:84.40px;line-height:84.40px;"><svg style="position:absolute;left:214px;top:18.2px" width="22" height="30" viewBox="840 264 22 30"><g stroke="#222" stroke-width="0.900" fill="none"><path d="M843 268H860M847.500 272.500H855.500M851.300 268V282.500"/><circle cx="851.300" cy="286.600" r="4"/></g></svg></div><div class="cell serif g" style="left:42.20px;top:252.30px;width:452.90px;height:15.80px;line-height:16.80px;font-size:11.3px;padding-left:4.9px;width:448.00px;">Elementy znaku kartograficznego</div><div class="cell serif " style="left:42.20px;top:269.70px;width:109.60px;height:132.30px;line-height:132.30px;"><svg style="position:absolute;left:0;top:0" width="110" height="133" viewBox="626.400 349 110 133"><g stroke="#666" stroke-width="0.700" fill="none"><path d="M658.700 384.500H686.300M665.500 392.500H679.500M672.500 384.500V413" stroke="#444" stroke-width="0.900"/><ellipse cx="672.500" cy="420.500" rx="6.800" ry="7.600" stroke="#444" stroke-width="0.900"/><path d="M658.700 371V384M686.300 371V384M686.300 384.500H700M679.500 392.500H700M679.500 412.500H700M679.500 422V437.500M658.700 371H661M684 371h2.300" stroke-dasharray="1.200 1.200" stroke="#888"/></g><g font-family="Liberation Sans, sans-serif" font-size="10" fill="#222" text-anchor="middle"><text x="673" y="370.800">c</text><text x="704" y="392">b</text><text x="704" y="408">d</text><text x="672.500" y="449">a</text></g></svg></div><div class="cell serif " style="left:153.80px;top:269.70px;width:128.70px;height:37.20px;line-height:38.20px;font-size:10.05px;padding-left:5.8px;width:122.90px;">geometria obiektu: punkt</div><div class="cell serif " style="left:283.80px;top:269.70px;width:211.30px;height:17.20px;line-height:11.20px;font-size:9.9px;text-align:center;text-indent:-10.8px;">Wymiary w skali</div><div class="cell serif num" style="left:283.80px;top:288.20px;width:51.50px;height:18.70px;line-height:16.30px;">1:500</div><div class="cell serif num" style="left:336.60px;top:288.20px;width:52.00px;height:18.70px;line-height:16.30px;">1:1000</div><div class="cell serif num" style="left:389.80px;top:288.20px;width:51.80px;height:18.70px;line-height:16.30px;">1:2000</div><div class="cell serif num" style="left:442.80px;top:288.20px;width:52.30px;height:18.70px;line-height:16.30px;">1:5000</div><div class="cell serif num" style="left:283.80px;top:308.20px;width:51.50px;height:17.50px;line-height:14.10px;">0,18</div><div class="cell serif num" style="left:336.60px;top:308.20px;width:52.00px;height:17.50px;line-height:14.10px;">0,18</div><div class="cell serif num" style="left:389.80px;top:308.20px;width:51.80px;height:17.50px;line-height:14.10px;">0,13</div><div class="cell serif num" style="left:442.80px;top:308.20px;width:52.30px;height:17.50px;line-height:14.10px;">0,13</div><div class="cell serif " style="left:153.80px;top:308.20px;width:128.70px;height:17.50px;line-height:14.10px;font-size:10.05px;padding-left:5.8px;width:122.90px;">grubość linii</div><div class="cell serif num" style="left:283.80px;top:327.20px;width:51.50px;height:17.70px;line-height:13.70px;">1,0</div><div class="cell serif num" style="left:336.60px;top:327.20px;width:52.00px;height:17.70px;line-height:13.70px;">1,0</div><div class="cell serif num" style="left:389.80px;top:327.20px;width:51.80px;height:17.70px;line-height:13.70px;">1,4</div><div class="cell serif num" style="left:442.80px;top:327.20px;width:52.30px;height:17.70px;line-height:13.70px;">1,4</div><div class="cell serif " style="left:153.80px;top:327.20px;width:100.50px;height:17.70px;line-height:13.70px;font-size:10.05px;padding-left:5.8px;width:94.70px;">średnica</div><div class="cell serif num" style="left:255.60px;top:327.20px;width:26.90px;height:17.70px;line-height:13.70px;">a</div><div class="cell serif num" style="left:283.80px;top:346.40px;width:51.50px;height:18.00px;line-height:13.20px;">1,0</div><div class="cell serif num" style="left:336.60px;top:346.40px;width:52.00px;height:18.00px;line-height:13.20px;">0,8</div><div class="cell serif num" style="left:389.80px;top:346.40px;width:51.80px;height:18.00px;line-height:13.20px;">0,8</div><div class="cell serif num" style="left:442.80px;top:346.40px;width:52.30px;height:18.00px;line-height:13.20px;">0,8</div><div class="cell serif " style="left:153.80px;top:346.40px;width:100.50px;height:18.00px;line-height:13.20px;font-size:10.05px;padding-left:5.8px;width:94.70px;">element</div><div class="cell serif num" style="left:255.60px;top:346.40px;width:26.90px;height:18.00px;line-height:13.20px;">b</div><div class="cell serif num" style="left:283.80px;top:365.70px;width:51.50px;height:18.20px;line-height:13.20px;">2,0</div><div class="cell serif num" style="left:336.60px;top:365.70px;width:52.00px;height:18.20px;line-height:13.20px;">2,0</div><div class="cell serif num" style="left:389.80px;top:365.70px;width:51.80px;height:18.20px;line-height:13.20px;">3,0</div><div class="cell serif num" style="left:442.80px;top:365.70px;width:52.30px;height:18.20px;line-height:13.20px;">3,0</div><div class="cell serif " style="left:153.80px;top:365.70px;width:100.50px;height:18.20px;line-height:13.20px;font-size:10.05px;padding-left:5.8px;width:94.70px;">element</div><div class="cell serif num" style="left:255.60px;top:365.70px;width:26.90px;height:18.20px;line-height:13.20px;">c</div><div class="cell serif num" style="left:283.80px;top:385.20px;width:51.50px;height:16.80px;line-height:13.20px;">2,0</div><div class="cell serif num" style="left:336.60px;top:385.20px;width:52.00px;height:16.80px;line-height:13.20px;">2,0</div><div class="cell serif num" style="left:389.80px;top:385.20px;width:51.80px;height:16.80px;line-height:13.20px;">2,0</div><div class="cell serif num" style="left:442.80px;top:385.20px;width:52.30px;height:16.80px;line-height:13.20px;">2,0</div><div class="cell serif " style="left:153.80px;top:385.20px;width:100.50px;height:16.80px;line-height:13.20px;font-size:10.05px;padding-left:5.8px;width:94.70px;">element</div><div class="cell serif num" style="left:255.60px;top:385.20px;width:26.90px;height:16.80px;line-height:13.20px;">d</div><div class="abs" style="left:40.30px;top:433.20px;width:456.80px;height:333.00px;background:#000;"></div><div class="cell serif " style="left:42.20px;top:435.20px;width:109.10px;height:14.40px;line-height:14.40px;font-size:12.3px;padding-left:6.8px;width:102.30px;background:#b2b2b2;"><b>SUSM11_02</b></div><div class="cell serif g" style="left:153.80px;top:435.20px;width:341.30px;height:14.40px;line-height:14.40px;font-size:11.8px;padding-left:5.8px;width:335.50px;"><b>wieża telekomunikacyjna</b></div><div class="cell serif g" style="left:42.20px;top:451.90px;width:452.90px;height:15.30px;line-height:17.30px;font-size:11.58px;padding-left:4.9px;width:448.00px;">Baza danych wykorzystywana do pozyskania obiektu</div><div class="cell serif " style="left:42.20px;top:468.60px;width:452.90px;height:12.40px;line-height:12.40px;font-size:9.8px;padding-left:4.9px;width:448.00px;">powiatowa baza GESUT</div><div class="cell serif g" style="left:42.20px;top:482.80px;width:452.90px;height:14.40px;line-height:16.40px;font-size:11.5px;padding-left:4.9px;width:448.00px;">Uwagi</div><div class="cell serif " style="left:42.20px;top:498.80px;width:452.90px;height:12.00px;line-height:13.60px;font-size:10.12px;padding-left:4.9px;width:448.00px;">Punkt wstawienia znaku kartograficznego znajduje się w środku okręgu.</div><div class="cell serif g" style="left:42.20px;top:512.50px;width:452.90px;height:14.70px;line-height:16.30px;font-size:11.5px;padding-left:4.9px;width:448.00px;">Znak kartograficzny</div><div class="cell serif " style="left:42.20px;top:528.80px;width:452.90px;height:84.40px;line-height:84.40px;"><svg style="position:absolute;left:214px;top:18.2px" width="22" height="30" viewBox="840 264 22 30"><g stroke="#222" stroke-width="0.900" fill="none"><path d="M843 268H860M847.500 272.500H855.500M851.300 268V282.500"/><circle cx="851.300" cy="286.600" r="4"/></g></svg></div><div class="cell serif g" style="left:42.20px;top:614.80px;width:452.90px;height:15.80px;line-height:16.80px;font-size:11.3px;padding-left:4.9px;width:448.00px;">Elementy znaku kartograficznego</div><div class="cell serif " style="left:42.20px;top:632.20px;width:109.60px;height:132.30px;line-height:132.30px;"><svg style="position:absolute;left:0;top:0" width="110" height="133" viewBox="626.400 349 110 133"><g stroke="#666" stroke-width="0.700" fill="none"><path d="M658.700 384.500H686.300M665.500 392.500H679.500M672.500 384.500V413" stroke="#444" stroke-width="0.900"/><ellipse cx="672.500" cy="420.500" rx="6.800" ry="7.600" stroke="#444" stroke-width="0.900"/><path d="M658.700 371V384M686.300 371V384M686.300 384.500H700M679.500 392.500H700M679.500 412.500H700M679.500 422V437.500M658.700 371H661M684 371h2.300" stroke-dasharray="1.200 1.200" stroke="#888"/></g><g font-family="Liberation Sans, sans-serif" font-size="10" fill="#222" text-anchor="middle"><text x="673" y="370.800">c</text><text x="704" y="392">b</text><text x="704" y="408">d</text><text x="672.500" y="449">a</text></g></svg></div><div class="cell serif " style="left:153.80px;top:632.20px;width:128.70px;height:37.20px;line-height:38.20px;font-size:10.05px;padding-left:5.8px;width:122.90px;">geometria obiektu: punkt</div><div class="cell serif " style="left:283.80px;top:632.20px;width:211.30px;height:17.20px;line-height:11.20px;font-size:9.9px;text-align:center;text-indent:-10.8px;">Wymiary w skali</div><div class="cell serif num" style="left:283.80px;top:650.70px;width:51.50px;height:18.70px;line-height:16.30px;">1:500</div><div class="cell serif num" style="left:336.60px;top:650.70px;width:52.00px;height:18.70px;line-height:16.30px;">1:1000</div><div class="cell serif num" style="left:389.80px;top:650.70px;width:51.80px;height:18.70px;line-height:16.30px;">1:2000</div><div class="cell serif num" style="left:442.80px;top:650.70px;width:52.30px;height:18.70px;line-height:16.30px;">1:5000</div><div class="cell serif num" style="left:283.80px;top:670.70px;width:51.50px;height:17.50px;line-height:14.10px;">0,18</div><div class="cell serif num" style="left:336.60px;top:670.70px;width:52.00px;height:17.50px;line-height:14.10px;">0,18</div><div class="cell serif num" style="left:389.80px;top:670.70px;width:51.80px;height:17.50px;line-height:14.10px;">0,13</div><div class="cell serif num" style="left:442.80px;top:670.70px;width:52.30px;height:17.50px;line-height:14.10px;">0,13</div><div class="cell serif " style="left:153.80px;top:670.70px;width:128.70px;height:17.50px;line-height:14.10px;font-size:10.05px;padding-left:5.8px;width:122.90px;">grubość linii</div><div class="cell serif num" style="left:283.80px;top:689.70px;width:51.50px;height:17.70px;line-height:13.70px;">1,0</div><div class="cell serif num" style="left:336.60px;top:689.70px;width:52.00px;height:17.70px;line-height:13.70px;">1,0</div><div class="cell serif num" style="left:389.80px;top:689.70px;width:51.80px;height:17.70px;line-height:13.70px;">1,4</div><div class="cell serif num" style="left:442.80px;top:689.70px;width:52.30px;height:17.70px;line-height:13.70px;">1,4</div><div class="cell serif " style="left:153.80px;top:689.70px;width:100.50px;height:17.70px;line-height:13.70px;font-size:10.05px;padding-left:5.8px;width:94.70px;">średnica</div><div class="cell serif num" style="left:255.60px;top:689.70px;width:26.90px;height:17.70px;line-height:13.70px;">a</div><div class="cell serif num" style="left:283.80px;top:708.90px;width:51.50px;height:18.00px;line-height:13.20px;">1,0</div><div class="cell serif num" style="left:336.60px;top:708.90px;width:52.00px;height:18.00px;line-height:13.20px;">0,8</div><div class="cell serif num" style="left:389.80px;top:708.90px;width:51.80px;height:18.00px;line-height:13.20px;">0,8</div><div class="cell serif num" style="left:442.80px;top:708.90px;width:52.30px;height:18.00px;line-height:13.20px;">0,8</div><div class="cell serif " style="left:153.80px;top:708.90px;width:100.50px;height:18.00px;line-height:13.20px;font-size:10.05px;padding-left:5.8px;width:94.70px;">element</div><div class="cell serif num" style="left:255.60px;top:708.90px;width:26.90px;height:18.00px;line-height:13.20px;">b</div><div class="cell serif num" style="left:283.80px;top:728.20px;width:51.50px;height:18.20px;line-height:13.20px;">2,0</div><div class="cell serif num" style="left:336.60px;top:728.20px;width:52.00px;height:18.20px;line-height:13.20px;">2,0</div><div class="cell serif num" style="left:389.80px;top:728.20px;width:51.80px;height:18.20px;line-height:13.20px;">3,0</div><div class="cell serif num" style="left:442.80px;top:728.20px;width:52.30px;height:18.20px;line-height:13.20px;">3,0</div><div class="cell serif " style="left:153.80px;top:728.20px;width:100.50px;height:18.20px;line-height:13.20px;font-size:10.05px;padding-left:5.8px;width:94.70px;">element</div><div class="cell serif num" style="left:255.60px;top:728.20px;width:26.90px;height:18.20px;line-height:13.20px;">c</div><div class="cell serif num" style="left:283.80px;top:747.70px;width:51.50px;height:16.80px;line-height:13.20px;">2,0</div><div class="cell serif num" style="left:336.60px;top:747.70px;width:52.00px;height:16.80px;line-height:13.20px;">2,0</div><div class="cell serif num" style="left:389.80px;top:747.70px;width:51.80px;height:16.80px;line-height:13.20px;">2,0</div><div class="cell serif num" style="left:442.80px;top:747.70px;width:52.30px;height:16.80px;line-height:13.20px;">2,0</div><div class="cell serif " style="left:153.80px;top:747.70px;width:100.50px;height:16.80px;line-height:13.20px;font-size:10.05px;padding-left:5.8px;width:94.70px;">element</div><div class="cell serif num" style="left:255.60px;top:747.70px;width:26.90px;height:16.80px;line-height:13.20px;">d</div></div><div class="abs" style="left:256px;top:562.600px;width:767px;height:20px;background:rgba(255,255,255,0.570);"></div><div class="abs" style="left:256px;top:562.600px;width:41.500px;height:20px;background:rgba(40,46,54,0.420);"></div><svg class="abs" style="left:256px;top:562.600px" width="70" height="20" viewBox="0 0 70 20"><path d="M2.500 3v14M4.500 3v14" stroke="#a8abae" stroke-width="1" stroke-dasharray="1 1"/><path d="M11.500 6.500l7 7M18.500 6.500l-7 7" stroke="#e8e8e8" stroke-width="1.600"/><path d="M27 5.500a3.300 3.300 0 0 0 3.500 4.500l5 5.500l2-1.800l-5.500-5a3.300 3.300 0 0 0-4-4.200l2 2l-1 1.500z" fill="#e4e4e4"/><rect x="44.700" y="3.400" width="13" height="11.600" fill="#5f6367" stroke="#b0b3b6" stroke-width="0.800"/><path d="M47 6.500l3 2.500l-3 2.500M51 12.500h4" stroke="#e0e0e0" stroke-width="1" fill="none"/><path d="M60.500 8.500h4l-2 2.500z" fill="#5a5d60"/></svg><div class="t mono" style="left:325px;top:566px;font-size:9px;font-style:italic;line-height:13px;color:#62666a;">Wpisz polecenie</div><svg class="abs" style="left:1014px;top:570px" width="7" height="5" viewBox="0 0 7 5"><path d="M0.500 4.500h6L3.500 0.800z" fill="#222"/></svg></body></html>
